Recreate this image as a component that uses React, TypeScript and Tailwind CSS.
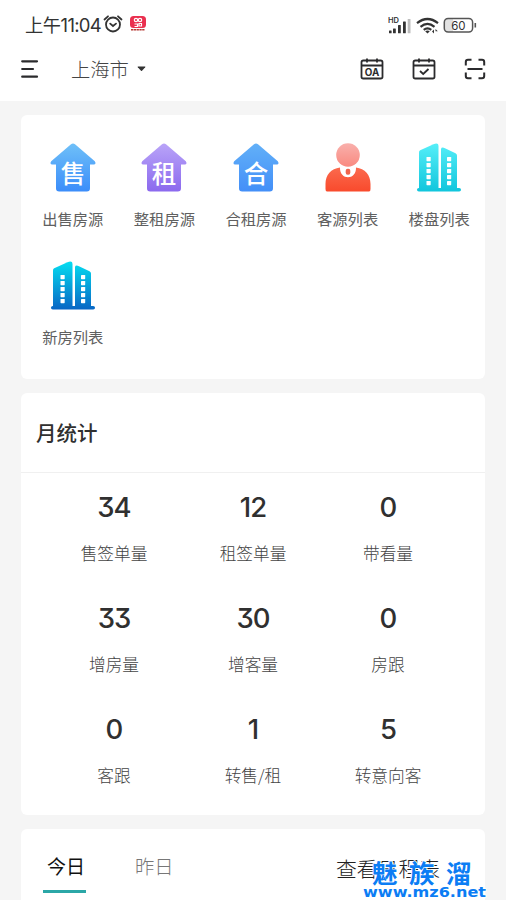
import React from "react";

const cjk = "font-['Noto_Sans_CJK_SC',sans-serif]";
const digits = "font-['Inter','Noto_Sans_CJK_SC',sans-serif]";

function House({ id, from, to, label }: { id: string; from: string; to: string; label: string }) {
  return (
    <svg width="48" height="52" viewBox="0 0 48 52">
      <defs>
        <linearGradient id={id} x1="0" y1="0" x2="0" y2="1">
          <stop offset="0" stopColor={from} />
          <stop offset="1" stopColor={to} />
        </linearGradient>
      </defs>
      <path
        d="M22 2.2Q24 .6 26 2.2L45.8 19.2Q47.6 22.2 44.8 22.5H41V46.3Q41 49.5 37.8 49.5H10.2Q7 49.5 7 46.3V22.5H3.2Q.4 22.2 2.2 19.2Z"
        fill={`url(#${id})`}
      />
      <text
        x="24"
        y="41.2"
        textAnchor="middle"
        fill="#fff"
        fontSize="24.5"
        fontWeight="500"
        fontFamily="'Noto Sans CJK SC', sans-serif"
      >
        {label}
      </text>
    </svg>
  );
}

function Person() {
  return (
    <svg width="48" height="52" viewBox="0 0 48 52">
      <defs>
        <linearGradient id="head" x1="0" y1="0" x2="0" y2="1">
          <stop offset="0" stopColor="#f9b0ac" />
          <stop offset="1" stopColor="#f98a80" />
        </linearGradient>
        <linearGradient id="torso" x1="0" y1="0" x2="0" y2="1">
          <stop offset="0" stopColor="#fb6a4e" />
          <stop offset="1" stopColor="#f94a2c" />
        </linearGradient>
      </defs>
      <path d="M3 49.5Q1.5 49.5 1.5 47V42C1.5 33 7 26.5 16 25.5C15.5 38.5 32.5 38.5 32 25.5C41 26.5 46.5 33 46.5 42V47Q46.5 49.5 45 49.5Z" fill="url(#torso)" />
      <circle cx="24" cy="13" r="11.8" fill="url(#head)" />
      <rect x="21.7" y="26.8" width="4.6" height="6" rx="2" fill="#f0644c" />
    </svg>
  );
}

function Towers({ id, from, to }: { id: string; from: string; to: string }) {
  const rows = [15, 21, 27, 33, 39];
  return (
    <svg width="48" height="52" viewBox="0 0 48 52">
      <defs>
        <linearGradient id={id} gradientUnits="userSpaceOnUse" x1="0" y1="2" x2="0" y2="50">
          <stop offset="0" stopColor={from} />
          <stop offset="1" stopColor={to} />
        </linearGradient>
      </defs>
      <g fill={`url(#${id})`}>
        <path d="M4 46.5V10.3Q4 9 5.200 8.3L18.5 2.2Q23.5 .3 23.5 4V46.5Z" />
        <path d="M26 46.5V7Q26.5 4.5 30 6.2L40.5 11.3Q42 12 42 13.5V46.5Z" />
        <rect x="2" y="46" width="44" height="3.6" rx="1.8" />
      </g>
      <g fill="#fff">
        {rows.map((y) => (
          <React.Fragment key={y}>
            <rect x="11.5" y={y} width="4.2" height="4.2" rx=".6" />
            <rect x="32" y={y} width="4.2" height="4.2" rx=".6" />
          </React.Fragment>
        ))}
      </g>
    </svg>
  );
}

function CalendarIcon({ children }: { children: React.ReactNode }) {
  return (
    <svg width="24" height="24" viewBox="0 0 24 24" fill="none" stroke="#2b2b2d" strokeWidth="1.8">
      <rect x="1.5" y="3.5" width="21" height="18" rx="1.8" />
      <path d="M1.5 8.5H22.5M7 1.5V5.5M17 1.5V5.5" />
      {children}
    </svg>
  );
}

function StatusIcons() {
  return (
    <svg width="93" height="22" viewBox="0 0 93 22" fill="none">
      <text x="0" y="9.5" fontSize="7.5" fontWeight="600" fill="#333" fontFamily="Inter, sans-serif">HD</text>
      <g fill="#333">
        <rect x="1" y="17.5" width="2.6" height="2.8" rx=".5" />
        <rect x="5" y="15.5" width="2.8" height="4.8" rx=".5" />
        <rect x="10" y="12" width="2.8" height="8.3" rx=".5" />
        <rect x="15" y="8.5" width="2.8" height="11.8" rx=".5" />
        <rect x="19.7" y="6" width="2.8" height="14.3" rx=".5" fill="#bdbdbd" />
      </g>
      <g stroke="#333" strokeWidth="2.2">
        <path d="M29 10.2Q39.5 1.8 50 10.2M32.5 13.8Q39.5 8 46.5 13.8M35.700 16.8Q39.5 14 43.3 16.8" />
      </g>
      <path d="M37.2 18.2Q39.5 16.6 41.8 18.2L39.5 20.5ZM44 18.5L46 20.5V16.5ZM47.5 16L49.8 18.3H47.5Z" fill="#333" />
      <rect x="57" y="6" width="8" height="13" fill="#e2e2e2" />
      <rect x="56.3" y="5.5" width="28.3" height="13.5" rx="3.8" stroke="#555" strokeWidth="1.5" />
      <path d="M87.300 10V14.5" stroke="#555" strokeWidth="1.6" />
      <text x="70.4" y="16.5" textAnchor="middle" fontSize="11.5" fill="#333" fontFamily="Inter, sans-serif">60</text>
    </svg>
  );
}

const shortcuts = [
  { label: "出售房源", icon: <House id="h1" from="#6fc0f8" to="#3b8dfa" label="售" /> },
  { label: "整租房源", icon: <House id="h2" from="#b9a4f8" to="#8b69ee" label="租" /> },
  { label: "合租房源", icon: <House id="h3" from="#62b0f8" to="#438ff8" label="合" /> },
  { label: "客源列表", icon: <Person /> },
  { label: "楼盘列表", icon: <Towers id="t1" from="#55eef8" to="#10c5dc" /> },
  { label: "新房列表", icon: <Towers id="t2" from="#05dcf0" to="#0865c4" /> },
];

const stats = [
  ["34", "售签单量"],
  ["12", "租签单量"],
  ["0", "带看量"],
  ["33", "增房量"],
  ["30", "增客量"],
  ["0", "房跟"],
  ["0", "客跟"],
  ["1", "转售/租"],
  ["5", "转意向客"],
];

export default function App() {
  return (
    <div className={`relative flex h-[900px] w-[506px] flex-col overflow-hidden bg-[#f5f5f5] text-[#303030] ${cjk}`}>
      <header className="h-[101px] shrink-0 bg-white">
        <div className="flex h-[46px] items-center pt-[2px] pr-[29px] pl-[25px]">
          <span className="w-[78px] text-[18.2px] leading-6 tracking-[-0.4px] whitespace-nowrap text-[#333]">
            上午<span className="font-['Inter'] text-[18.5px] tracking-[-0.7px]">11:04</span>
          </span>
          <svg width="20" height="20" viewBox="0 0 20 20" fill="none" stroke="#333" strokeWidth="1.8" strokeLinecap="round">
            <circle cx="10" cy="10.5" r="7" />
            <path d="M1.5 5.5L5 2.3M15 2.3L18.5 5.5M7.2 9.6L10 12L13 9.6" />
          </svg>
          <svg className="ml-[6px]" width="18" height="18" viewBox="0 0 18 18">
            <rect x="1" y="1" width="16" height="12" rx="3.5" fill="#ea304f" />
            <g fill="none" stroke="#fff" strokeWidth="1.2">
              <circle cx="7" cy="5" r="1.7" />
              <circle cx="11" cy="5" r="1.7" />
              <path d="M5.5 9H8.5V11.5H5.5M10 8.5H12.5V11H10Z" />
            </g>
            <path d="M2 14.8H16" stroke="#b63a35" strokeWidth="1.6" strokeDasharray="2.3 .5" />
          </svg>
          <div className="-mr-[1px] ml-auto w-[90px]"><StatusIcons /></div>
        </div>
        <div className="flex h-[46px] items-center pr-[20px] pl-[21px]">
          <svg width="18" height="20" viewBox="0 0 18 20" stroke="#2b2b2d" strokeWidth="2.2" strokeLinecap="round">
            <path d="M1.2 2.3H16M1.2 10H12M1.2 17.7H16" />
          </svg>
          <span className="ml-[32px] text-[19.3px] leading-6 font-light text-[#444]">上海市</span>
          <svg className="ml-[8px]" width="9" height="6" viewBox="0 0 9 6">
            <path d="M1 .5H8Q8.700 .7 8.200 1.3L5 4.8Q4.5 5.200 4 4.8L.8 1.3Q.3 .7 1 .5Z" fill="#333" />
          </svg>
          <div className="ml-auto flex items-center gap-[28px]">
            <CalendarIcon>
              <text x="12" y="18.6" textAnchor="middle" fill="#2b2b2d" stroke="none" fontSize="9.8" fontWeight="700" fontFamily="Inter, sans-serif">OA</text>
            </CalendarIcon>
            <CalendarIcon>
              <path d="M8 14L11.2 17L16.5 12" />
            </CalendarIcon>
            <svg width="22" height="22" viewBox="0 0 22 22" fill="none" stroke="#2b2b2d" strokeWidth="2">
              <path d="M7.5 1.8H4Q1.8 1.8 1.8 4V7.5M14.5 1.8H18Q20.2 1.8 20.2 4V7.5M7.5 20.2H4Q1.8 20.2 1.8 18V14.5M14.5 20.2H18Q20.2 20.2 20.2 18V14.5M3.5 11H18.5" />
            </svg>
          </div>
        </div>
      </header>

      <main className="flex flex-col gap-[14px] px-[21px] pt-[14px]">
        <section className="grid h-[264px] grid-cols-5 content-start gap-y-[4px] rounded-md bg-white pt-[27px] pl-[6px]">
          {shortcuts.map((s) => (
            <div key={s.label} className="flex h-[114px] flex-col items-center">
              {s.icon}
              <span className="mt-[12px] text-[15.3px] leading-6 text-[#606060]">{s.label}</span>
            </div>
          ))}
        </section>

        <section className="h-[422px] rounded-md bg-white">
          <h2 className="flex h-[80px] items-center border-b border-[#f0f0f0] pl-[15px] text-[20.5px] font-medium text-[#303030]">月统计</h2>
          <div className="grid grid-cols-[138px_140px_130px] pt-[19px] pl-[24px]">
            {stats.map(([n, label]) => (
              <div key={label} className="flex h-[111px] flex-col items-center">
                <span className={`text-[27.5px] leading-[30px] font-medium tracking-[-1px] [font-feature-settings:'cv09'] ${digits}`}>{n}</span>
                <span className="mt-[19px] text-[16.7px] leading-6 font-light text-[#444]">{label}</span>
              </div>
            ))}
          </div>
        </section>

        <section className="flex h-[90px] items-start rounded-md bg-white pl-[22px]">
          <div className="flex h-[64px] w-[43px] flex-col items-center border-b-[3px] border-[#2ba7a7] pt-[25px] pl-[3px]">
            <span className="text-[19px] leading-6 whitespace-nowrap text-[#111]">今日</span>
          </div>
          <span className="ml-[49px] pt-[25px] text-[19.3px] leading-6 font-light text-[#777]">昨日</span>
          <span className="ml-auto pt-[27px] pr-[45px] text-[20.8px] leading-6 font-light text-[#222]">查看日程表</span>
        </section>
      </main>

      {/* Site watermark laid over the bottom right corner */}
      <svg className="absolute right-0 bottom-0" width="150" height="46" viewBox="356 854 150 46">
        <g fill="#0b7df4" stroke="#fff" strokeWidth="1.6" paintOrder="stroke" fontWeight="700">
          <text x="372" y="882.5" fontSize="25.5" letterSpacing="11.5" fontFamily="'Noto Sans CJK SC', sans-serif">魅族溜</text>
          <text x="363" y="897" fontSize="14" textLength="123" lengthAdjust="spacingAndGlyphs" fontFamily="'DejaVu Sans', sans-serif">www.mz6.net</text>
        </g>
      </svg>
    </div>
  );
}
